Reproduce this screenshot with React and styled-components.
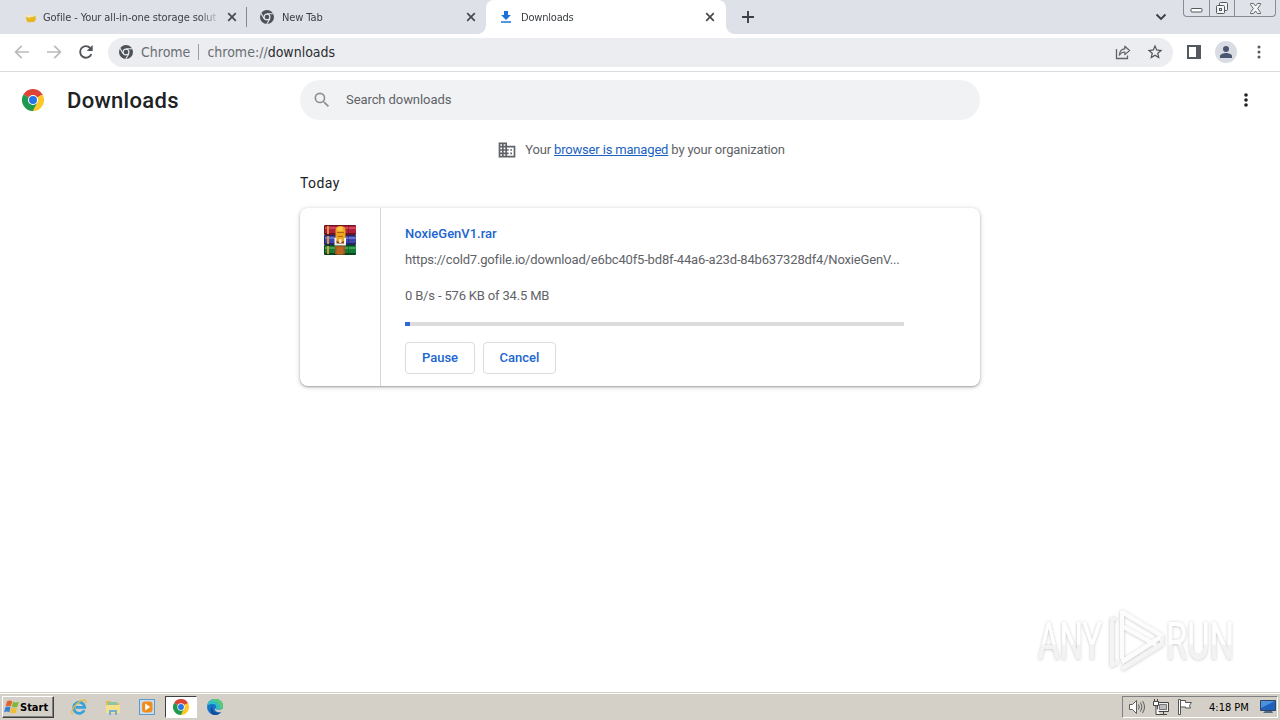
import React from 'react';
import styled, { createGlobalStyle } from 'styled-components';

const GlobalStyle = createGlobalStyle`
  * {
    box-sizing: border-box;
  }

  body {
    margin: 0;
    overflow: hidden;
    background: #fff;
    font-family: Roboto, 'Liberation Sans', sans-serif;
  }

  svg {
    display: block;
    flex: none;
  }
`;

const Desktop = styled.div`
  position: relative;
  display: flex;
  flex-direction: column;
  width: 1280px;
  height: 720px;
`;

/* ---- text ---- */

const Label = styled.span`
  flex: none;
  white-space: pre;
  font-size: ${({ $size }) => $size || 13}px;
  letter-spacing: ${({ $spacing }) => $spacing || 0}px;
`;

const SystemLabel = styled(Label)`
  font-family: 'DejaVu Sans Condensed', 'DejaVu Sans', sans-serif;
  font-stretch: condensed;
`;

/* ---- tab strip ---- */

const TabStrip = styled.div`
  display: flex;
  height: 34px;
  padding-left: 8px;
  background: #dee1e8;
`;

const Tab = styled.div`
  position: relative;
  display: flex;
  align-items: center;
  width: ${({ $active }) => ($active ? 240 : 239)}px;
  height: 34px;
  padding: 0 ${({ $active }) => ($active ? 8 : 7)}px 0 12px;
  gap: 7px;
  color: #3c4043;
  background: ${({ $active }) => ($active ? '#fff' : 'transparent')};
  border-radius: 8px 8px 0 0;

  &::before,
  &::after {
    content: '';
    display: ${({ $active }) => ($active ? 'block' : 'none')};
    position: absolute;
    bottom: 0;
    width: 8px;
    height: 8px;
  }

  &::before {
    left: -8px;
    background: radial-gradient(circle at 0 0, transparent 7.5px, #fff 8px);
  }

  &::after {
    right: -8px;
    background: radial-gradient(circle at 100% 0, transparent 7.5px, #fff 8px);
  }
`;

const TabTitle = styled.div`
  flex: 1;
  overflow: hidden;
  line-height: 16px;
  mask-image: linear-gradient(90deg, #000 156px, transparent 178px);
`;

const TabDivider = styled.div`
  width: 1px;
  height: 20px;
  margin: 7px 0 0 -1px;
  background: #85888e;
`;

const NewTab = styled.div`
  display: flex;
  align-items: center;
  padding-left: 14px;
`;

const StripEnd = styled.div`
  display: flex;
  align-items: center;
  margin-left: auto;
  gap: 16px;
  padding-right: 4px;
`;

const WindowButtons = styled.div`
  display: flex;
  align-self: flex-start;
  height: 17px;
  border: 1px solid #888c93;
  border-top: 0;
  border-radius: 0 0 4px 4px;
  background: #dfe2e8;
`;

const WindowButton = styled.div`
  display: flex;
  align-items: center;
  justify-content: center;
  width: ${({ $width }) => $width}px;

  & + & {
    border-left: 1px solid #888c93;
  }
`;

/* ---- toolbar ---- */

const Toolbar = styled.div`
  display: flex;
  height: 38px;
  padding: 4px 0 4px 12px;
  border-bottom: 1px solid #dadce0;
  background: #fff;
`;

const NavButtons = styled.div`
  display: flex;
  align-items: center;
  gap: 12px;
  width: 96px;
  padding-bottom: 1px;
`;

const Omnibox = styled.div`
  display: flex;
  align-items: center;
  width: 1065px;
  height: 29px;
  padding: 0 9px 1px 10px;
  border-radius: 15px;
  background: #ebedf0;
  color: #6a6e73;
  gap: 8px;

  b {
    font-weight: 400;
    color: #2c2d30;
  }
`;

const SiteName = styled.div`
  display: flex;
  align-items: center;
  gap: 7px;
`;

const OmniboxDivider = styled.div`
  width: 1px;
  height: 16px;
  background: #9a9da2;
`;

const OmniboxActions = styled.div`
  display: flex;
  margin-left: auto;
  gap: 14px;
`;

const ToolbarActions = styled.div`
  display: flex;
  align-items: center;
  margin-left: 12px;
  padding-bottom: 1px;
  gap: 12px;
`;

const Avatar = styled.div`
  display: flex;
  align-items: center;
  justify-content: center;
  width: 22px;
  height: 22px;
  border-radius: 50%;
  background: #d9dce3;
`;

/* ---- downloads page ---- */

const Page = styled.div`
  flex: 1;
  background: #fff;
`;

const PageHeader = styled.header`
  display: flex;
  align-items: center;
  height: 56px;
  padding: 0 24px 0 22px;
`;

const PageTitle = styled.h1`
  margin: 0 0 0 23px;
  width: 233px;
  font-size: 22px;
  font-weight: 500;
  letter-spacing: 0.3px;
  color: #202124;
`;

const Search = styled.div`
  display: flex;
  align-items: center;
  width: 680px;
  height: 40px;
  padding-left: 12px;
  gap: 14px;
  border-radius: 20px;
  background: #f0f2f4;
  color: #5f6368;

  span {
    padding-bottom: 2px;
  }
`;

const PageMenu = styled.div`
  margin-left: auto;
`;

const Content = styled.main`
  width: 680px;
  margin: 0 auto;
`;

const Managed = styled.div`
  display: flex;
  align-items: center;
  justify-content: center;
  height: 44px;
  gap: 8px;
  padding-left: 2px;
  color: #5f6368;

  span {
    padding-bottom: 2px;
  }

  a {
    color: #1b62c2;
    text-decoration: underline;
  }
`;

const DateHeading = styled.h2`
  margin: 0;
  height: 36px;
  line-height: 22px;
  font-size: 14px;
  font-weight: 400;
  letter-spacing: 0.4px;
  color: #202124;
`;

const Card = styled.section`
  display: flex;
  height: 178px;
  border-radius: 8px;
  background: #fff;
  box-shadow: 0 1px 2px rgba(60, 64, 67, 0.4), 0 1px 4px 1px rgba(60, 64, 67, 0.16);
`;

const FileIcon = styled.div`
  display: flex;
  justify-content: center;
  width: 81px;
  padding-top: 16px;
  border-right: 1px solid #d5d7da;
`;

const Details = styled.div`
  width: 523px;
  padding: 15px 0 0 24px;
  color: #5f6368;
`;

const FileName = styled.div`
  height: 20px;
  line-height: 20px;
  font-weight: 500;
  color: #1b66cf;
`;

const DetailRow = styled.div`
  height: 20px;
  line-height: 20px;
  margin-top: ${({ $top }) => $top}px;
`;

const Progress = styled.div`
  height: 4px;
  margin-top: 17px;
  background: #dcdcdc;
`;

const ProgressBar = styled.div`
  height: 4px;
  background: #3367d6;
`;

const Actions = styled.div`
  display: flex;
  gap: 8px;
  margin-top: 16px;
`;

const Button = styled.button`
  width: ${({ $width }) => $width}px;
  height: 32px;
  padding: 0 0 2px;
  border: 1px solid #dadce0;
  border-radius: 4px;
  background: #fff;
  color: #1b66cf;
  font-family: inherit;
  font-weight: 500;
`;

const Watermark = styled.div`
  position: absolute;
  left: 1030px;
  top: 602px;
`;

/* ---- taskbar ---- */

const Taskbar = styled.footer`
  display: flex;
  align-items: center;
  height: 28px;
  padding: 2px 2px 0 2px;
  background: #d4d0c8;
  box-shadow: inset 0 1px #d4d0c8, inset 0 2px #fff;
`;

const StartButton = styled.div`
  display: flex;
  align-items: center;
  width: 52px;
  height: 22px;
  padding-left: 1px;
  border: 1px solid;
  border-color: #fff #404040 #404040 #fff;
  box-shadow: inset -1px -1px #808080;
  font-weight: 700;
  color: #000;
`;

const QuickLaunch = styled.div`
  display: flex;
  margin-left: 8px;
`;

const TaskItem = styled.div`
  display: flex;
  align-items: center;
  justify-content: center;
  width: ${({ $pressed }) => ($pressed ? 32 : 34)}px;
  height: 22px;
  margin: 0 ${({ $pressed }) => ($pressed ? 1 : 0)}px;
  border: 1px solid;
  border-color: ${({ $pressed }) =>
    $pressed ? '#404040 #fff #fff #404040' : 'transparent'};
  background: ${({ $pressed }) => ($pressed ? '#fff' : 'transparent')};
`;

const Tray = styled.div`
  display: flex;
  align-items: center;
  width: 156px;
  height: 22px;
  margin-left: auto;
  padding-left: 5px;
  border: 1px solid;
  border-color: #808080 #fff #fff #808080;
  color: #000;
`;

const TrayIcons = styled.div`
  display: flex;
  gap: 6px;
  margin-right: 15px;
`;

const Clock = styled(SystemLabel)`
  margin-right: 10px;
`;

/* ---- icons ---- */

const ChromeMono = () => (
  <svg width="16" height="16" viewBox="0 0 16 16">
    <circle cx="8" cy="8" r="7" fill="#4c5157" />
    <circle cx="8" cy="8" r="3.5" fill="#e6e8ec" />
    <circle cx="8" cy="8" r="2.3" fill="#4c5157" />
    <path
      d="M8 4.7h6.3M5.1 9.7 2 4.2M10.9 9.7 7.8 15"
      stroke="#e6e8ec"
      strokeWidth="1.1"
    />
  </svg>
);

const ChromeLogo = ({ size }) => (
  <svg width={size} height={size} viewBox="0 0 48 48">
    <path d="M24 24 3.2 12A24 24 0 0 1 44.8 12z" fill="#dc4437" />
    <path d="M24 24 44.8 12A24 24 0 0 1 24 48z" fill="#fdc929" />
    <path d="M24 24V48A24 24 0 0 1 3.2 12z" fill="#20994f" />
    <path d="M24 13h21.3l-.6-1.1H24z" fill="#dc4437" />
    <path d="M14.5 29.5 3.6 11.3 12 21z" fill="#20994f" />
    <path d="M33.5 29.5 24 48l-5-13z" fill="#20994f" />
    <path d="M33.5 29.5 24 48l10-8z" fill="#fdc929" />
    <circle cx="24" cy="24" r="11" fill="#fff" />
    <circle cx="24" cy="24" r="8.7" fill="#2674e8" />
  </svg>
);

const CloseIcon = () => (
  <svg width="16" height="16" viewBox="0 0 16 16">
    <path d="m4.2 4.2 7.6 7.6m0-7.6-7.6 7.6" stroke="#46494e" strokeWidth="1.7" />
  </svg>
);

const GofileIcon = () => (
  <svg width="16" height="16" viewBox="0 0 16 16">
    <path d="M6 7.8 9 8.4l6.600-1.400.2 3.600-1.500 2.300-6.800.3L6.200 10.500z" fill="#e5b821" />
    <path d="m4.500 6.500 4 2.300 7.200-2-3.400-.6-3 .4-2-.6z" fill="#f8e6b0" />
  </svg>
);

const DownloadIcon = () => (
  <svg width="16" height="16" viewBox="0 0 16 16">
    <path d="M6 2h4v4h2.9L8 10.9 3.1 6H6zM3 12.2h10v1.5H3z" fill="#1a73d8" />
  </svg>
);

const ArrowIcon = ({ flip }) => (
  <svg width="20" height="20" viewBox="0 0 20 20">
    <path
      d={
        flip
          ? 'M3 10h13M10.3 3.9l6.1 6.1-6.1 6.1'
          : 'M17 10H4M9.7 3.9 3.6 10l6.1 6.1'
      }
      fill="none"
      stroke="#b8babd"
      strokeWidth="1.7"
    />
  </svg>
);

const ReloadIcon = () => (
  <svg width="20" height="20" viewBox="0 0 20 20">
    <path
      d="M15.3 12.1A5.8 5.8 0 1 1 14.2 6l1.5 1.5"
      fill="none"
      stroke="#505357"
      strokeWidth="1.9"
    />
    <path d="M16.7 3v6h-6z" fill="#505357" />
  </svg>
);

const ShareIcon = () => (
  <svg width="18" height="18" viewBox="0 0 18 18">
    <path d="M2.5 6v9.500h11v-3" fill="none" stroke="#5f6368" strokeWidth="1.3" />
    <path
      d="M5.3 12.2c.3-4 2.3-6.1 5.5-6.3V3.2l4.8 4.3-4.8 4.1V9c-2.3-.1-4.1 1-5.5 3.2z"
      fill="none"
      stroke="#5f6368"
      strokeWidth="1.2"
      strokeLinejoin="round"
    />
  </svg>
);

const StarIcon = () => (
  <svg width="18" height="18" viewBox="0 0 24 24">
    <path
      d="m22 9.24-7.19-.62L12 2 9.19 8.63 2 9.24l5.46 4.73L5.82 21 12 17.27 18.18 21l-1.63-7.03zM12 15.4l-3.76 2.27 1-4.28-3.32-2.88 4.38-.38L12 6.1l1.71 4.04 4.38.38-3.32 2.88 1 4.28z"
      fill="#505357"
    />
  </svg>
);

const SidePanelIcon = () => (
  <svg width="18" height="18" viewBox="0 0 18 18">
    <path d="M2 2h14v14H2zm2 2v10h7V4z" fill="#55585d" fillRule="evenodd" />
  </svg>
);

const PersonIcon = () => (
  <svg width="14" height="14" viewBox="0 0 14 14">
    <circle cx="7" cy="4" r="3" fill="#4a5672" />
    <path d="M1 13v-2c0-2 4-3 6-3s6 1 6 3v2z" fill="#4a5672" />
  </svg>
);

const DotsIcon = ({ color, r }) => (
  <svg width="20" height="20" viewBox="0 0 20 20" fill={color}>
    <circle cx="10" cy="5" r={r} />
    <circle cx="10" cy="10" r={r} />
    <circle cx="10" cy="15" r={r} />
  </svg>
);

const SearchIcon = () => (
  <svg width="20" height="20" viewBox="0 0 24 24">
    <path
      d="M15.5 14h-.79l-.28-.27A6.47 6.47 0 0 0 16 9.5 6.5 6.5 0 1 0 9.5 16c1.61 0 3.09-.59 4.23-1.57l.27.28v.79l5 4.99L20.49 19zm-6 0a4.5 4.5 0 1 1 0-9 4.5 4.5 0 0 1 0 9z"
      fill="#8d9195"
    />
  </svg>
);

const BusinessIcon = () => (
  <svg width="20" height="20" viewBox="0 0 24 24">
    <path
      d="M12 7V3H2v18h20V7zM6 19H4v-2h2zm0-4H4v-2h2zm0-4H4V9h2zm0-4H4V5h2zm4 12H8v-2h2zm0-4H8v-2h2zm0-4H8V9h2zm0-4H8V5h2zm10 12h-8v-2h2v-2h-2v-2h2v-2h-2V9h8zm-2-8h-2v2h2zm0 4h-2v2h2z"
      fill="#5f6368"
    />
  </svg>
);

const books = [
  { y: 1, light: '#d2465c', mid: '#b01f3c', dark: '#6b1426' },
  { y: 11, light: '#6a6fd0', mid: '#3e45a8', dark: '#23275f' },
  { y: 21, light: '#3ba552', mid: '#157a36', dark: '#0a451d' }
];

const RarIcon = () => (
  <svg width="32" height="32" viewBox="0 0 32 32">
    {books.map(({ y, light, mid, dark }) => (
      <g key={y}>
        <rect x="0" y={y} width="32" height="10" rx="1" fill={dark} />
        <rect x="1" y={y + 1} width="31" height="7" fill={mid} />
        <rect x="1" y={y + 2} width="31" height="2" fill={light} />
        <rect x="3" y={y + 1} width="2" height="8" fill="#d99a3c" />
        <rect x="24" y={y} width="1" height="9" fill={dark} opacity="0.5" />
      </g>
    ))}
    <path d="M11 22h10v8q-5 2-10 0z" fill="#a4521a" />
    <path d="M12.500 23h7v7h-7z" fill="#bd6525" />
    <path d="M11 15h11v6H11z" fill="#7c4218" />
    <rect x="11.500" y="2" width="10" height="16" rx="4.500" fill="#eea51d" />
    <rect x="13" y="3" width="6" height="4" rx="2" fill="#f8c84a" />
    <path d="M13 8.500h7M14 12.500h5" stroke="#b0650e" strokeWidth="1.200" />
    <path
      d="M11.500 14v6.500h9.500V14M16.300 15v4"
      fill="none"
      stroke="#f6f2e8"
      strokeWidth="2"
    />
  </svg>
);

const WindowsFlag = () => (
  <svg width="16" height="16" viewBox="0 0 16 16">
    <path d="M3 2.300c2-1.200 3.600-.9 5.200 0L6.900 7.300c-1.700-.9-3.300-.9-5.200 0z" fill="#e6602b" />
    <path d="M9 2.800c1.900.9 3.700.9 5.800 0l-1.400 5c-2 .9-3.700.8-5.700-.1z" fill="#7db83a" />
    <path d="M1.400 8.200c1.900-1 3.500-.8 5.200 0l-1.300 5c-1.700-.9-3.300-.9-5.200 0z" fill="#3a80d2" />
    <path d="M7.400 8.700c1.900.9 3.700.9 5.700 0l-1.400 5c-2 .9-3.700.8-5.700-.1z" fill="#f3bd2c" />
  </svg>
);

const ExplorerIcon = () => (
  <svg width="18" height="18" viewBox="0 0 18 18">
    <path
      d="M14.3 12.2A5.6 5.6 0 1 1 14.8 9.3H5.5"
      fill="none"
      stroke="#39a1dc"
      strokeWidth="2.7"
    />
    <path
      d="M3.2 16C0 15.7 2.5 9.5 7.5 5.2S16.8.8 16 5.2"
      fill="none"
      stroke="#e6bd38"
      strokeWidth="1.3"
    />
  </svg>
);

const FolderIcon = () => (
  <svg width="18" height="18" viewBox="0 0 18 18">
    <path d="M2 3h5l1 2h7v10H2z" fill="#e0b94f" />
    <path d="M4 4h9v4H4z" fill="#8ac6a3" />
    <path d="M2 7h14v8H2z" fill="#f5df8b" />
    <path d="M5 17v-5h8v5h-2v-3H7v3z" fill="#70afd6" />
  </svg>
);

const PlayerIcon = () => (
  <svg width="18" height="18" viewBox="0 0 18 18">
    <rect x="1.500" y="1.500" width="15" height="15" fill="#c7def0" stroke="#5e9bcb" />
    <rect x="4" y="3.500" width="10.500" height="11" rx="3" fill="#f18b1c" />
    <path d="m7.200 5.600 5 3.400-5 3.400z" fill="#fff" />
  </svg>
);

const EdgeIcon = () => (
  <svg width="18" height="18" viewBox="0 0 18 18">
    <circle cx="9" cy="9" r="8" fill="#1676c8" />
    <path
      d="M1.2 8C2 3 5.500 1 9 1c5 0 8 3.200 8 6.800 0 3-2.500 4.200-5.200 4-1.800-.1-2.300-.8-1.800-1.600C11 8 9.500 6 6.800 6 4.300 6 2.200 6.600 1.200 8z"
      fill="#35bfc2"
    />
    <path
      d="M9 1c5 0 8 3.200 8 6.800 0 2-1 3.200-2.500 3.700C14.500 6 12 3 5 2.200 6.200 1.300 7.500 1 9 1z"
      fill="#58ca72"
    />
    <path d="M7 8c-2 3 .5 7.500 7.500 6.800A8 8 0 0 1 9 17c-5 0-6-7-2-9z" fill="#124b99" />
    <path
      d="M10 9.700c-.5 1.300 0 2 1.800 2.100 1.800.1 3.900-.3 5.200-1.600v3c-3 1.800-8 .9-8-2z"
      fill="#d4d0c8"
    />
  </svg>
);

const SpeakerIcon = () => (
  <svg width="18" height="18" viewBox="0 0 18 18" fill="none" stroke="#5d5d5d">
    <path d="M1.500 6.500h3l4-4v13l-4-4h-3z" fill="#fff" />
    <path d="M10.500 6.500q1.500 2.500 0 5M12.500 4.500q3 4.500 0 9M14.500 3q4 6 0 12" />
  </svg>
);

const NetworkIcon = () => (
  <svg width="18" height="18" viewBox="0 0 18 18" fill="none" stroke="#454545">
    <path d="M5.500 4.500h11v9h-11zM8 16.500h7M11.500 14v2" fill="#eee" />
    <path d="M7.500 6.500h7v5h-7z" fill="#bbb" stroke="#777" />
    <path d="M1.500 3.500h5v4h-5zM2.500 1v2M5.500 1v2M4 8v8.500h4" fill="#fff" />
  </svg>
);

const FlagIcon = () => (
  <svg width="18" height="18" viewBox="0 0 18 18">
    <path
      d="M2.500 1.500h2v15h-2zM4.500 2.500h5v2h6l-2 3 1 2.500h-5v-1h-5z"
      fill="#fff"
      stroke="#555"
    />
  </svg>
);

const MonitorIcon = () => (
  <svg width="18" height="16" viewBox="0 0 18 16">
    <path d="M1.500 1.500h15v10h-15z" fill="#1f62bd" stroke="#31455f" />
    <path d="M2 2h14L2 9z" fill="#4a92df" />
    <path d="M6 12h7l1 2H4z" fill="#516a89" />
  </svg>
);

const AnyRunMark = () => (
  <svg width="250" height="84" viewBox="0 0 250 84">
    <defs>
      <filter id="soft" x="-10%" y="-20%" width="120%" height="140%">
        <feDropShadow dx="0" dy="0.5" stdDeviation="1.6" floodOpacity="0.26" />
      </filter>
      <linearGradient id="fade" x1="0" y1="0" x2="0" y2="1">
        <stop offset="0.54" stopColor="#fff" />
        <stop offset="0.56" stopColor="#f3f3f3" />
      </linearGradient>
    </defs>
    <g filter="url(#soft)">
      <g
        fill="url(#fade)"
        fontFamily="Roboto, sans-serif"
        fontSize="52"
        fontWeight="400"
      >
        <text x="8" y="57" textLength="64" lengthAdjust="spacingAndGlyphs">
          ANY
        </text>
        <text x="136" y="57" textLength="68" lengthAdjust="spacingAndGlyphs">
          RUN
        </text>
      </g>
      <g fill="none" stroke="#fcfcfc" strokeWidth="4" strokeLinejoin="round">
        <path d="M92 57V10l40 24-40 26M92 24l34 19" />
        <path d="M86 17h-4v46l6-3M92 67l40-25v-8" stroke="#f4f4f4" />
      </g>
    </g>
  </svg>
);

/* ---- data ---- */

const tabs = [
  {
    title: 'Gofile - Your all-in-one storage soluti',
    icon: <GofileIcon />,
    spacing: -0.1
  },
  { title: 'New Tab', icon: <ChromeMono />, spacing: -0.1 },
  { title: 'Downloads', icon: <DownloadIcon />, spacing: -0.2, active: true }
];

const download = {
  name: 'NoxieGenV1.rar',
  url:
    'https://cold7.gofile.io/download/e6bc40f5-bd8f-44a6-a23d-84b637328df4/NoxieGenV...',
  status: '0 B/s - 576 KB of 34.5 MB',
  progress: 1
};

const BrowserTabs = () => (
  <TabStrip>
    {tabs.map(({ title, icon, spacing, active }, index) => (
      <React.Fragment key={title}>
        <Tab $active={active}>
          {icon}
          <TabTitle>
            <SystemLabel $size={11} $spacing={spacing}>
              {title}
            </SystemLabel>
          </TabTitle>
          <CloseIcon />
        </Tab>
        {index === 0 && <TabDivider />}
      </React.Fragment>
    ))}
    <NewTab>
      <svg width="16" height="16" viewBox="0 0 16 16">
        <path d="M8 2v12M2 8h12" stroke="#3c4043" strokeWidth="1.9" />
      </svg>
    </NewTab>
    <StripEnd>
      <svg width="12" height="12" viewBox="0 0 12 12">
        <path
          d="m1.500 3.500 4.500 4.500 4.500-4.500"
          fill="none"
          stroke="#3c4043"
          strokeWidth="1.900"
        />
      </svg>
      <WindowButtons>
        <WindowButton $width={25}>
          <svg width="13" height="13" viewBox="0 0 13 13">
            <rect x="1" y="6.500" width="11" height="3.500" rx="1" fill="#fff" stroke="#54585f" />
          </svg>
        </WindowButton>
        <WindowButton $width={25}>
          <svg width="14" height="14" viewBox="0 0 14 14" fill="#f3f4f6" stroke="#54585f">
            <rect x="4.500" y="1.500" width="8" height="8" rx="1" />
            <rect x="1.500" y="4.500" width="8" height="8" rx="1" />
            <rect x="4.500" y="7.500" width="2" height="2" />
          </svg>
        </WindowButton>
        <WindowButton $width={41}>
          <svg width="13" height="13" viewBox="0 0 13 13">
            <path
              d="M1.500 1.500h3l2 2.500 2-2.500h3v1L8.700 6.500l2.800 4v1h-3l-2-2.500-2 2.500h-3v-1l2.800-4-2.800-4z"
              fill="#f3f4f6"
              stroke="#54585f"
              strokeWidth="0.900"
            />
          </svg>
        </WindowButton>
      </WindowButtons>
    </StripEnd>
  </TabStrip>
);

const BrowserToolbar = () => (
  <Toolbar>
    <NavButtons>
      <ArrowIcon />
      <ArrowIcon flip />
      <ReloadIcon />
    </NavButtons>
    <Omnibox>
      <SiteName>
        <ChromeMono />
        <SystemLabel $size={14}>Chrome</SystemLabel>
      </SiteName>
      <OmniboxDivider />
      <SystemLabel $size={14}>
        chrome://<b>downloads</b>
      </SystemLabel>
      <OmniboxActions>
        <ShareIcon />
        <StarIcon />
      </OmniboxActions>
    </Omnibox>
    <ToolbarActions>
      <SidePanelIcon />
      <Avatar>
        <PersonIcon />
      </Avatar>
      <DotsIcon color="#55585d" r={1.5} />
    </ToolbarActions>
  </Toolbar>
);

const Downloads = () => {
  const { name, url, status, progress } = download;

  return (
    <Page>
      <PageHeader>
        <ChromeLogo size={22} />
        <PageTitle>Downloads</PageTitle>
        <Search>
          <SearchIcon />
          <Label $spacing={-0.08}>Search downloads</Label>
        </Search>
        <PageMenu>
          <DotsIcon color="#202124" r={1.8} />
        </PageMenu>
      </PageHeader>
      <Content>
        <Managed>
          <BusinessIcon />
          <Label $spacing={-0.17}>
            Your <a>browser is managed</a> by your organization
          </Label>
        </Managed>
        <DateHeading>Today</DateHeading>
        <Card>
          <FileIcon>
            <RarIcon />
          </FileIcon>
          <Details>
            <FileName>
              <Label>{name}</Label>
            </FileName>
            <DetailRow $top={6}>
              <Label $spacing={-0.17}>{url}</Label>
            </DetailRow>
            <DetailRow $top={16}>
              <Label $spacing={-0.17}>{status}</Label>
            </DetailRow>
            <Progress>
              <ProgressBar style={{ width: `${progress}%` }} />
            </Progress>
            <Actions>
              <Button $width={70}>
                <Label>Pause</Label>
              </Button>
              <Button $width={73}>
                <Label>Cancel</Label>
              </Button>
            </Actions>
          </Details>
        </Card>
      </Content>
    </Page>
  );
};

const SystemTaskbar = () => (
  <Taskbar>
    <StartButton>
      <WindowsFlag />
      <SystemLabel $size={11}>Start</SystemLabel>
    </StartButton>
    <QuickLaunch>
      <TaskItem>
        <ExplorerIcon />
      </TaskItem>
      <TaskItem>
        <FolderIcon />
      </TaskItem>
      <TaskItem>
        <PlayerIcon />
      </TaskItem>
      <TaskItem $pressed>
        <ChromeLogo size={16} />
      </TaskItem>
      <TaskItem>
        <EdgeIcon />
      </TaskItem>
    </QuickLaunch>
    <Tray>
      <TrayIcons>
        <SpeakerIcon />
        <NetworkIcon />
        <FlagIcon />
      </TrayIcons>
      <Clock $size={11}>4:18 PM</Clock>
      <MonitorIcon />
    </Tray>
  </Taskbar>
);

const App = () => (
  <Desktop>
    <GlobalStyle />
    <BrowserTabs />
    <BrowserToolbar />
    <Downloads />
    <Watermark>
      <AnyRunMark />
    </Watermark>
    <SystemTaskbar />
  </Desktop>
);

export default App;
